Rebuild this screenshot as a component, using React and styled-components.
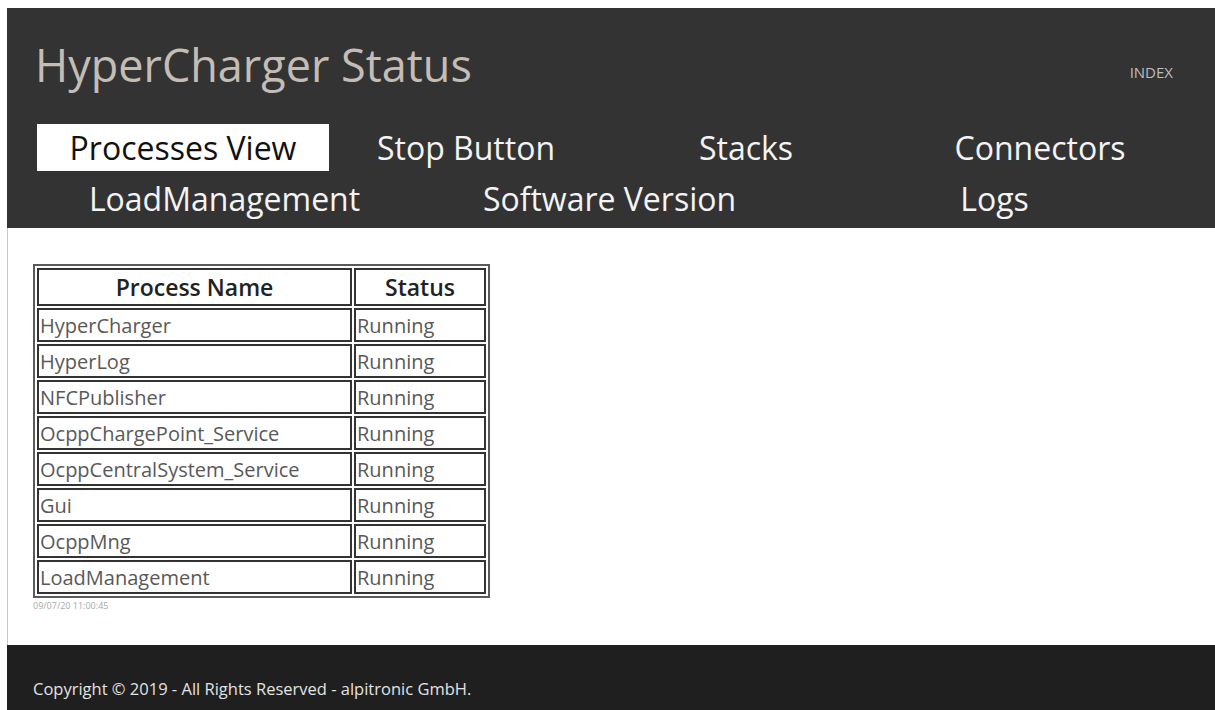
import React from "react";
import styled, { createGlobalStyle } from "styled-components";

const GlobalStyle = createGlobalStyle`
  html, body {
    height: 100%;
  }
  body {
    margin: 8px 0 0 7px;
    background: #ffffff;
    font-family: "Open Sans", "Liberation Sans", sans-serif;
    overflow: hidden;
  }
`;

const Page = styled.div`
  display: flex;
  flex-direction: column;
  min-height: calc(100vh - 8px);
`;

const Header = styled.header`
  background: #333333;
  padding-bottom: 6px;
`;

const TitleBar = styled.div`
  height: 112px;
  display: flex;
  align-items: center;
  justify-content: space-between;
  padding: 0 42px 0 28px;
  margin-bottom: 4px;
`;

const Title = styled.h1`
  margin: 0;
  font-size: 45px;
  font-weight: 400;
  color: #c4bdb6;
`;

const IndexLink = styled.a`
  font-size: 15px;
  color: #bdbdbd;
  text-decoration: none;
  margin-top: 16px;
`;

const NavRow = styled.nav`
  display: grid;
  grid-template-columns: ${({ $columns }) => $columns};
  padding-left: ${({ $inset }) => $inset}px;
  margin-top: ${({ $gap }) => $gap || 0}px;
`;

const NavItem = styled.a`
  height: 47px;
  display: flex;
  align-items: center;
  justify-content: center;
  font-size: 32px;
  color: ${({ $active }) => ($active ? "#111111" : "#f4f4f4")};
  background: ${({ $active }) => ($active ? "#ffffff" : "transparent")};
  text-decoration: none;
  white-space: nowrap;
`;

const Main = styled.main`
  flex: 1;
  border-left: 1px solid #c8c8c8;
  padding: 36px 0 0 25px;
`;

const ProcessTable = styled.table`
  border: 2px solid #5a5a5a;
  border-spacing: 2px;
`;

const HeadCell = styled.th`
  border: 2px solid #333333;
  height: 34px;
  padding: 0 1px;
  font-size: 23px;
  font-weight: 600;
  color: #222222;
`;

const Cell = styled.td`
  border: 2px solid #333333;
  height: 30px;
  padding: 0 1px;
  width: ${({ $width }) => $width}px;
  font-size: 20px;
  color: #595959;
  text-align: left;
  white-space: nowrap;
`;

const Stamp = styled.div`
  margin-top: 1px;
  font-size: 9px;
  color: #a8a8a8;
`;

const Footer = styled.footer`
  background: #1f1f1f;
  height: 65px;
  display: flex;
  align-items: center;
  padding: 22px 0 0 26px;
  box-sizing: border-box;
  font-size: 16.5px;
  color: #e2e2e2;
`;

const processes = [
  "HyperCharger",
  "HyperLog",
  "NFCPublisher",
  "OcppChargePoint_Service",
  "OcppCentralSystem_Service",
  "Gui",
  "OcppMng",
  "LoadManagement",
];

export default function App() {
  return (
    <>
      <GlobalStyle />
      <Page>
        <Header>
          <TitleBar>
            <Title>HyperCharger Status</Title>
            <IndexLink href="#">INDEX</IndexLink>
          </TitleBar>
          <NavRow $columns="292px 274px 286px 302px" $inset={30}>
            <NavItem href="#" $active>Processes View</NavItem>
            <NavItem href="#">Stop Button</NavItem>
            <NavItem href="#">Stacks</NavItem>
            <NavItem href="#">Connectors</NavItem>
          </NavRow>
          <NavRow $columns="385px 385px 385px" $inset={25} $gap={4}>
            <NavItem href="#">LoadManagement</NavItem>
            <NavItem href="#">Software Version</NavItem>
            <NavItem href="#">Logs</NavItem>
          </NavRow>
        </Header>
        <Main>
          <ProcessTable>
            <thead>
              <tr>
                <HeadCell>Process Name</HeadCell>
                <HeadCell>Status</HeadCell>
              </tr>
            </thead>
            <tbody>
              {processes.map((name) => (
                <tr key={name}>
                  <Cell $width={309}>{name}</Cell>
                  <Cell $width={126}>Running</Cell>
                </tr>
              ))}
            </tbody>
          </ProcessTable>
          <Stamp>09/07/20 11:00:45</Stamp>
        </Main>
        <Footer>Copyright © 2019 - All Rights Reserved - alpitronic GmbH.</Footer>
      </Page>
    </>
  );
}
